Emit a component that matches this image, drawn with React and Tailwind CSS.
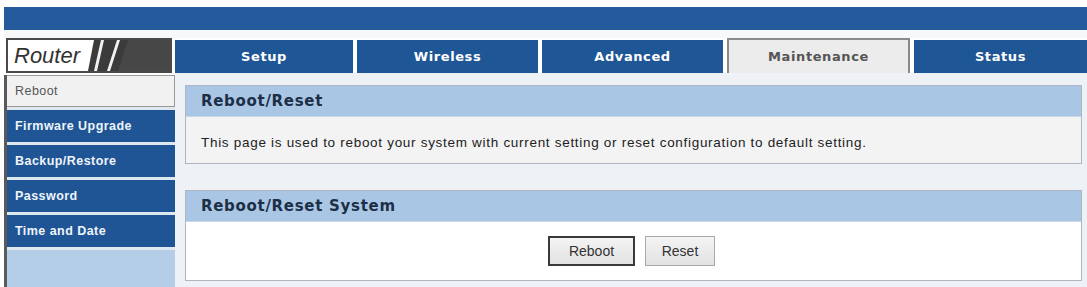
import React from 'react';

const TABS = ['Setup', 'Wireless', 'Advanced', 'Maintenance', 'Status'];
const MENU = ['Reboot', 'Firmware Upgrade', 'Backup/Restore', 'Password', 'Time and Date'];

function Logo() {
  return (
    <div className="flex w-[166px] h-[35px] border-2 border-[#4a4a4a] bg-white ml-[6px] overflow-hidden">
      <span className="w-[80px] shrink-0 pl-[6px] text-[22px] leading-[31px] italic text-[#333] font-['Liberation_Sans',Arial,sans-serif]">
        Router
      </span>
      <svg className="flex-1 h-full" viewBox="0 0 82 31" preserveAspectRatio="none">
        <polygon points="6,0 82,0 82,31 0,31" fill="#3b3b3b" />
        <polygon points="40,0 82,0 82,31 30,31" fill="#474747" />
        <polygon points="13,0 16,0 9,31 6,31" fill="#f2f2f2" />
        <polygon points="29,0 32,0 22,31 19,31" fill="#f2f2f2" />
      </svg>
    </div>
  );
}

function Panel({ title, children, bodyClass }) {
  return (
    <div className="border border-[#aeb6bf]">
      <div className="h-[31px] bg-[#a9c7e5] border-b border-[#c9d9ea] flex items-center pl-[15px] text-[15px] tracking-[0.7px] font-bold text-[#1d2f47] font-['DejaVu_Sans',Verdana,sans-serif]">
        {title}
      </div>
      <div className={bodyClass}>{children}</div>
    </div>
  );
}

export default function App() {
  return (
    <div className="w-[1087px] h-[287px] bg-white overflow-hidden flex flex-col">
      <div className="h-[7px] shrink-0" />
      <div className="h-[23px] shrink-0 ml-[4px] bg-[#245b9c]" />
      <div className="h-[8px] shrink-0 ml-[4px] bg-[#f7f8fa]" />

      <div className="flex items-end shrink-0 h-[35px]">
        <Logo />
        <div className="flex gap-[4px] ml-[3px] flex-1 items-end">
          {TABS.map((t, i) => (
            <div key={t}
              className={`h-[33px] flex items-center justify-center text-[13px] font-bold tracking-[0.6px] font-['DejaVu_Sans',Verdana,sans-serif]
                ${i === 3
                  ? 'w-[183px] h-[35px] bg-[#ececec] text-[#555] border-2 border-b-0 border-[#8a8a8a]'
                  : i === 4 ? 'flex-1 bg-[#1f5695] text-white' : i === 0 ? 'w-[178px] bg-[#1f5695] text-white' : 'w-[181px] bg-[#1f5695] text-white'}`}>
              {t}
            </div>
          ))}
        </div>
      </div>

      <div className="flex flex-1 min-h-0">
        <div className="w-[171px] shrink-0 ml-[4px] border-l-[3px] border-[#5a5a5a] mt-[2px] flex flex-col gap-[3px] bg-[#dfe7ef]">
          {MENU.map((m, i) => (
            <div key={m}
              className={`h-[32px] shrink-0 flex items-center pl-[8px] text-[12.5px] tracking-[0.45px] font-['Liberation_Sans',Tahoma,sans-serif]
                ${i === 0
                  ? 'bg-[#f1f1f1] text-[#555] border border-l-0 border-[#9a9a9a]'
                  : 'bg-[#1f5594] text-[#eef4fb] font-bold'}`}>
              {m}
            </div>
          ))}
          <div className="flex-1 bg-[#b5cee7]" />
        </div>

        <div className="flex-1 bg-[#eef1f5] pl-[10px] pr-[5px] pt-[12px] flex flex-col gap-[26px]">
          <Panel title="Reboot/Reset" bodyClass="h-[46px] bg-[#f3f3f3] flex items-center pl-[15px] pt-[7px] text-[13.5px] tracking-[0.7px] text-[#222] font-['Liberation_Sans',Tahoma,sans-serif]">
            This page is used to reboot your system with current setting or reset configuration to default setting.
          </Panel>
          <Panel title="Reboot/Reset System" bodyClass="h-[58px] bg-white flex items-center justify-center gap-[10px] pr-[4px]">
            <button className="w-[87px] h-[30px] border-2 border-[#3a3a3a] bg-gradient-to-b from-[#f4f4f4] to-[#e2e2e2] text-[14px] text-[#333] font-['Liberation_Sans',Tahoma,sans-serif]">
              Reboot
            </button>
            <button className="w-[70px] h-[30px] border border-[#a8a8a8] bg-gradient-to-b from-[#f4f4f4] to-[#e2e2e2] text-[14px] text-[#333] font-['Liberation_Sans',Tahoma,sans-serif]">
              Reset
            </button>
          </Panel>
        </div>
      </div>
    </div>
  );
}
